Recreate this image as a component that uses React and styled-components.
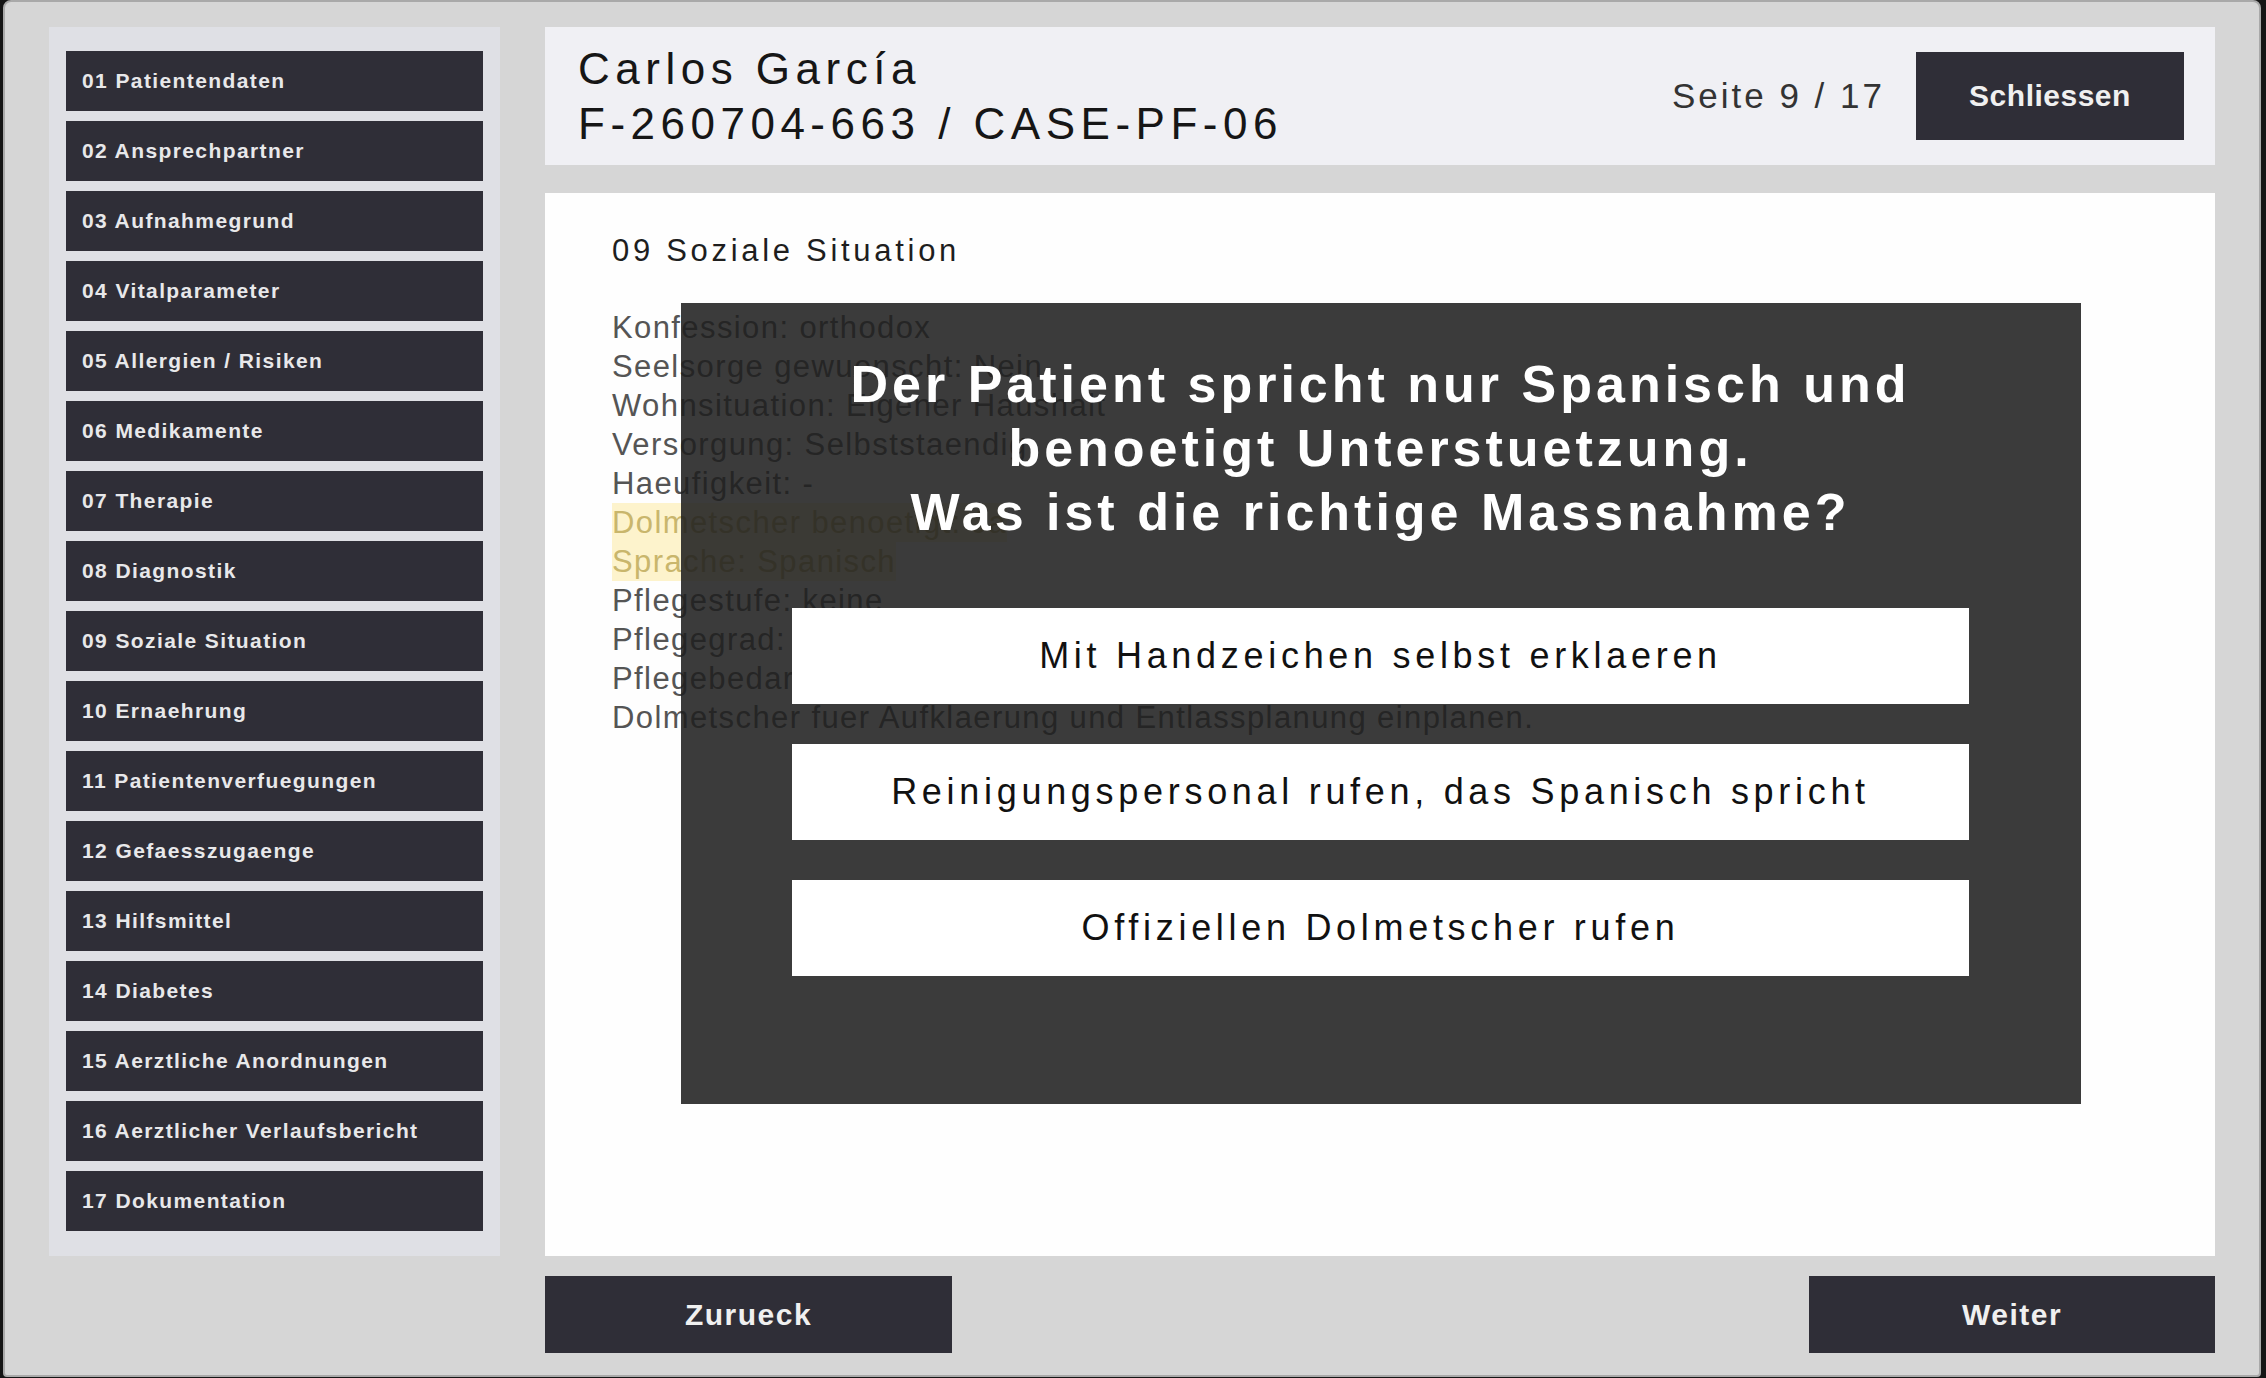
import React from 'react'
import styled, { createGlobalStyle } from 'styled-components'

const GlobalStyle = createGlobalStyle`
  html, body {
    margin: 0;
    padding: 0;
    background: #151515;
    font-family: "Liberation Sans", Arial, sans-serif;
  }
  * {
    box-sizing: border-box;
  }
`

const Frame = styled.div`
  width: 2258px;
  height: 1377px;
  margin-left: 3px;
  border: 2px solid #a9a9a9;
  border-radius: 8px 8px 4px 4px;
  background: #d6d6d6;
  display: grid;
  grid-template-columns: 451px 1fr;
  column-gap: 45px;
  padding: 25px 44px 22px 44px;
  overflow: hidden;
`

const Sidebar = styled.nav`
  align-self: start;
  height: 1229px;
  background: #dfe0e5;
  padding: 24px 17px 25px;
  display: flex;
  flex-direction: column;
  gap: 10px;
`

const NavItem = styled.div`
  height: 60px;
  flex: 0 0 60px;
  background: #2f2e37;
  color: #e8e8ea;
  display: flex;
  align-items: center;
  padding-left: 16px;
  font-size: 21px;
  font-weight: 700;
  letter-spacing: 1.4px;
  white-space: nowrap;
`

const Main = styled.div`
  display: flex;
  flex-direction: column;
  min-width: 0;
`

const Header = styled.header`
  height: 138px;
  flex: 0 0 138px;
  background: #f0f0f4;
  display: flex;
  align-items: center;
  justify-content: space-between;
  padding: 0 31px 0 33px;
`

const PatientName = styled.div`
  font-size: 44px;
  line-height: 55px;
  letter-spacing: 5.5px;
  color: #161616;
  white-space: nowrap;
`

const HeaderRight = styled.div`
  display: flex;
  align-items: center;
  gap: 31px;
`

const PageInfo = styled.span`
  font-size: 35px;
  letter-spacing: 3px;
  color: #333;
`

const DarkButton = styled.button`
  width: ${p => p.$w}px;
  height: ${p => p.$h}px;
  border: none;
  border-radius: 0;
  background: #2f2e37;
  color: #f0f0f0;
  font-family: "Liberation Sans", Arial, sans-serif;
  font-size: 30px;
  font-weight: 700;
  letter-spacing: ${p => p.$ls || 0.5}px;
  cursor: pointer;
  padding: 0;
`

const Content = styled.section`
  position: relative;
  flex: 1;
  margin-top: 28px;
  background: #fefefe;
  padding: 38px 67px;
`

const SectionTitle = styled.div`
  font-size: 31px;
  line-height: 39px;
  letter-spacing: 3.7px;
  color: #1e1e1e;
  margin-bottom: 38px;
`

const Line = styled.div`
  font-size: 31px;
  line-height: 39px;
  height: 39px;
  letter-spacing: 1.4px;
  color: #555;
  white-space: nowrap;
`

const Marked = styled.span`
  display: inline-block;
  background: #fdf3cc;
  color: #c9b66c;
`

const Overlay = styled.div`
  position: absolute;
  top: 110px;
  left: 136px;
  width: 1400px;
  height: 801px;
  background: rgba(30, 30, 30, 0.87);
  padding: 49px 112px 0 111px;
  display: flex;
  flex-direction: column;
`

const Question = styled.div`
  text-align: center;
  color: #ffffff;
  font-size: 52px;
  font-weight: 700;
  line-height: 64px;
  letter-spacing: 4px;
  margin-bottom: 64px;
  white-space: nowrap;
`

const Options = styled.div`
  display: flex;
  flex-direction: column;
  gap: 40px;
`

const Option = styled.button`
  height: 96px;
  border: none;
  border-radius: 0;
  background: #ffffff;
  color: #111;
  font-family: "Liberation Sans", Arial, sans-serif;
  font-size: 36px;
  letter-spacing: 4.7px;
  cursor: pointer;
  padding: 0;
`

const Footer = styled.footer`
  flex: 0 0 77px;
  margin-top: 20px;
  display: flex;
  justify-content: space-between;
`

const sections = [
  '01 Patientendaten',
  '02 Ansprechpartner',
  '03 Aufnahmegrund',
  '04 Vitalparameter',
  '05 Allergien / Risiken',
  '06 Medikamente',
  '07 Therapie',
  '08 Diagnostik',
  '09 Soziale Situation',
  '10 Ernaehrung',
  '11 Patientenverfuegungen',
  '12 Gefaesszugaenge',
  '13 Hilfsmittel',
  '14 Diabetes',
  '15 Aerztliche Anordnungen',
  '16 Aerztlicher Verlaufsbericht',
  '17 Dokumentation',
]

const lines = [
  { text: 'Konfession: orthodox' },
  { text: 'Seelsorge gewuenscht: Nein' },
  { text: 'Wohnsituation: Eigener Haushalt' },
  { text: 'Versorgung: Selbststaendig' },
  { text: 'Haeufigkeit: -' },
  { text: 'Dolmetscher benoetigt: Ja', marked: true },
  { text: 'Sprache: Spanisch', marked: true },
  { text: 'Pflegestufe: keine' },
  { text: 'Pflegegrad: -' },
  { text: 'Pflegebedarf: -' },
  { text: 'Dolmetscher fuer Aufklaerung und Entlassplanung einplanen.' },
]

const answers = [
  'Mit Handzeichen selbst erklaeren',
  'Reinigungspersonal rufen, das Spanisch spricht',
  'Offiziellen Dolmetscher rufen',
]

export default function App() {
  return (
    <>
      <GlobalStyle />
      <Frame>
        <Sidebar>
          {sections.map(s => (
            <NavItem key={s}>{s}</NavItem>
          ))}
        </Sidebar>
        <Main>
          <Header>
            <PatientName>
              Carlos García
              <br />
              F-260704-663 / CASE-PF-06
            </PatientName>
            <HeaderRight>
              <PageInfo>Seite 9 / 17</PageInfo>
              <DarkButton $w={268} $h={88}>Schliessen</DarkButton>
            </HeaderRight>
          </Header>
          <Content>
            <SectionTitle>09 Soziale Situation</SectionTitle>
            {lines.map(l => (
              <Line key={l.text}>
                {l.marked ? <Marked>{l.text}</Marked> : l.text}
              </Line>
            ))}
            <Overlay>
              <Question>
                Der Patient spricht nur Spanisch und
                <br />
                benoetigt Unterstuetzung.
                <br />
                Was ist die richtige Massnahme?
              </Question>
              <Options>
                {answers.map(a => (
                  <Option key={a}>{a}</Option>
                ))}
              </Options>
            </Overlay>
          </Content>
          <Footer>
            <DarkButton $w={407} $h={77} $ls={1.5}>Zurueck</DarkButton>
            <DarkButton $w={406} $h={77} $ls={1.5}>Weiter</DarkButton>
          </Footer>
        </Main>
      </Frame>
    </>
  )
}
